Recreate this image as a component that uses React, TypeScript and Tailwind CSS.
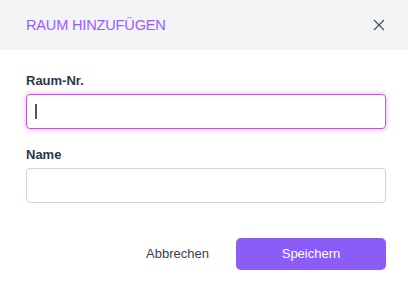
import React from "react";

const App = () => {
  return (
    <div className="w-[408px] h-[290px] bg-white font-['Liberation_Sans',Arial,sans-serif]">
      {/* Header */}
      <div className="h-[50px] bg-[#f3f4f6] flex items-center justify-between pl-[26px] pr-[22px]">
        <h2 className="text-[14.6px] text-[#9b5cf6] tracking-[-0.2px] pt-[2px]">RAUM HINZUFÜGEN</h2>
        <button className="text-[#4b5563]">
          <svg width="14" height="14" viewBox="0 0 14 14" fill="none" stroke="currentColor" strokeWidth="1.3">
            <path d="M2 2l10 10M12 2L2 12" />
          </svg>
        </button>
      </div>

      {/* Form */}
      <div className="pl-[26px] pr-[22px] pt-[23px]">
        <label className="block text-[13px] font-bold text-[#2d3748] leading-[16px]">Raum-Nr.</label>
        <div className="mt-[5px] h-[35px] rounded-[4px] border border-[#b85fc9] shadow-[0_0_4px_1px_rgba(200,120,220,0.45)] flex items-center pl-[8px]">
          <div className="w-[2px] h-[15px] bg-[#555]" />
        </div>

        <label className="block text-[13px] font-bold text-[#2d3748] leading-[16px] mt-[18px]">Name</label>
        <div className="mt-[5px] h-[35px] rounded-[4px] border border-[#cfd4db]" />

        <div className="flex justify-end items-center mt-[35px] gap-[27px]">
          <button className="text-[13px] text-[#374151]">Abbrechen</button>
          <button className="w-[150px] h-[32px] rounded-[5px] bg-[#8b5cf6] text-white text-[13px]">Speichern</button>
        </div>
      </div>
    </div>
  );
};

export default App;
